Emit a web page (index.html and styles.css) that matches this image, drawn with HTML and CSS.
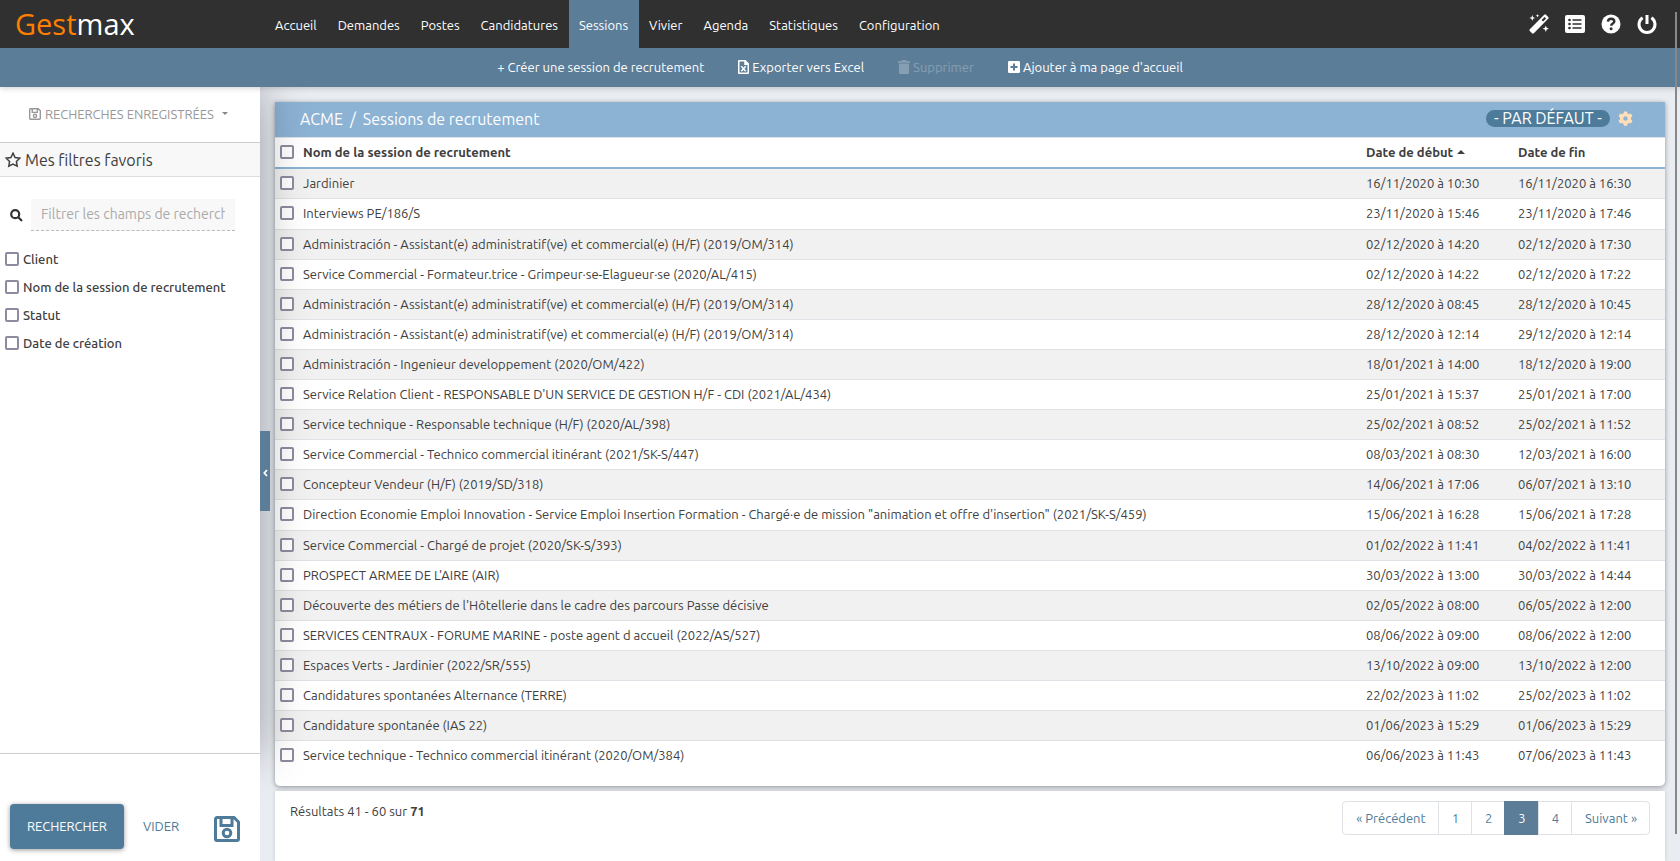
FILE: index.html
```html
<!DOCTYPE html>
<html lang="fr">
<head>
<meta charset="utf-8">
<title>Gestmax - Sessions de recrutement</title>
<link rel="stylesheet" href="styles.css">
</head>
<body>
<header class="topbar">
  <a class="logo" href="#"><span class="logo-accent">Gest</span>max</a>
  <nav class="nav">
    <a href="#">Accueil</a><a href="#">Demandes</a><a href="#">Postes</a><a href="#">Candidatures</a><a href="#" class="active">Sessions</a><a href="#">Vivier</a><a href="#">Agenda</a><a href="#">Statistiques</a><a href="#">Configuration</a>
  </nav>
  <div class="tools">
    <button aria-label="Assistant"><svg viewBox="0 0 20 20"><path fill-rule="evenodd" d="M15.2.8a1.3 1.3 0 0 1 1.8 0l2.2 2.2a1.3 1.3 0 0 1 0 1.8L4.800 19.200a1.300 1.300 0 0 1-1.800 0L.8 17a1.300 1.300 0 0 1 0-1.800zM12.600 6l1.500 1.500 3-3L15.600 3z"/><path d="M3.300 1l.8 2.200 2.200.8-2.200.8-.8 2.200-.8-2.200L.3 4l2.200-.8zM8.500 0l.5 1.300 1.300.5-1.300.5-.5 1.300L8 2.300l-1.300-.5L8 1.300zM16.800 11.500l.9 2.300 2.300.9-2.300.9-.9 2.300-.9-2.300-2.300-.9 2.300-.9z"/></svg></button>
    <button aria-label="Liste"><svg viewBox="0 0 20 20"><rect y="1" width="20" height="18" rx="2"/><g class="cut"><circle cx="4.500" cy="6" r="1.300"/><circle cx="4.500" cy="10" r="1.300"/><circle cx="4.500" cy="14" r="1.300"/><path d="M7.500 5.200h9v1.600h-9zM7.500 9.200h9v1.600h-9zM7.500 13.200h9v1.600h-9z"/></g></svg></button>
    <button aria-label="Aide"><svg viewBox="0 0 20 20"><circle cx="10" cy="10" r="9.500"/><path class="cut-line" d="M6.900 7.600C7.100 5.700 8.400 4.700 10.100 4.700c1.800 0 3.200 1 3.200 2.700 0 2.100-3.100 2.200-3.100 4.400"/><circle class="cut" cx="10.100" cy="14.800" r="1.500"/></svg></button>
    <button aria-label="Déconnexion"><svg viewBox="0 0 20 20"><path class="line" d="M5.600 3.800a8 8 0 1 0 8.800 0M10 1v9" /></svg></button>
  </div>
</header>
<div class="actions">
  <button>+ Créer une session de recrutement</button>
  <button><svg class="file" viewBox="0 0 11 14"><path fill-rule="evenodd" d="M1 0h6.500L11 3.500V13a1 1 0 0 1-1 1H1a1 1 0 0 1-1-1V1a1 1 0 0 1 1-1zm.5 1.400v11.200h8V5H6.200V1.400z"/><path class="x-line" d="M3.300 6.200l4.400 5M7.700 6.200l-4.400 5"/></svg>Exporter vers Excel</button>
  <button disabled><svg class="trash" viewBox="0 0 12 14"><path d="M4 0h4l.6 1H12v1.800H0V1h3.400zM1 3.600h10V13a1 1 0 0 1-1 1H2a1 1 0 0 1-1-1z"/></svg>Supprimer</button>
  <button><svg class="plus" viewBox="0 0 12 12"><path fill-rule="evenodd" d="M1.300 0h9.400A1.300 1.300 0 0 1 12 1.300v9.400a1.300 1.300 0 0 1-1.300 1.300H1.300A1.300 1.300 0 0 1 0 10.700V1.300A1.300 1.300 0 0 1 1.300 0zM5 2.500V5H2.500v2H5v2.500h2V7h2.500V5H7V2.500z"/></svg>Ajouter à ma page d'accueil</button>
</div>
<div class="workspace">
  <aside class="sidebar">
    <div class="filters">
      <button class="saved"><svg viewBox="0 0 26 26"><path class="save" d="M3 1.500h17l4.500 4.500v17a1.500 1.500 0 0 1-1.500 1.500H3A1.500 1.500 0 0 1 1.500 23V3A1.500 1.500 0 0 1 3 1.500zM7 2v7.500h11V2"/><circle class="save" cx="13" cy="17" r="3.500"/></svg>RECHERCHES ENREGISTRÉES<span class="caret"></span></button>
      <h2 class="favorites"><svg viewBox="0 0 16 16"><path d="M8 1.200l2.100 4.300 4.700.7-3.400 3.300.8 4.700L8 12l-4.200 2.200.8-4.700L1.200 6.200l4.700-.7z"/></svg>Mes filtres favoris</h2>
      <div class="search"><svg viewBox="0 0 13 13"><circle cx="5.200" cy="5.200" r="4"/><path d="M8.300 8.300l3.700 3.700"/></svg><input type="text" aria-label="Filtrer" placeholder="Filtrer les champs de recherche"></div>
      <div class="checks">
        <label><input type="checkbox">Client</label>
        <label><input type="checkbox">Nom de la session de recrutement</label>
        <label><input type="checkbox">Statut</label>
        <label><input type="checkbox">Date de création</label>
      </div>
    </div>
    <div class="side-actions">
      <button class="primary">RECHERCHER</button>
      <button class="clear">VIDER</button>
      <button class="store" aria-label="Enregistrer"><svg viewBox="0 0 26 26"><path class="save" d="M3 1.500h17l4.500 4.500v17a1.500 1.500 0 0 1-1.500 1.500H3A1.500 1.500 0 0 1 1.500 23V3A1.500 1.500 0 0 1 3 1.500zM7 2v7.500h11V2"/><circle class="save" cx="13" cy="17" r="3.800"/></svg></button>
    </div>
    <button class="collapse" aria-label="Replier"><svg viewBox="0 0 5 8"><path d="M4 1L1.300 4 4 7"/></svg></button>
  </aside>
  <main class="content">
    <section class="card">
      <div class="card-title">
        <h1>ACME<span>/</span>Sessions de recrutement</h1>
        <button class="view">- PAR DÉFAUT -</button>
        <button class="gear" aria-label="Réglages"><svg viewBox="-8 -8 16 16"><circle r="4.200"/><g><path id="tooth" d="M-1.700-7.600h3.400l.8 4h-5z"/><use href="#tooth" transform="rotate(60)"/><use href="#tooth" transform="rotate(120)"/><use href="#tooth" transform="rotate(180)"/><use href="#tooth" transform="rotate(240)"/><use href="#tooth" transform="rotate(300)"/></g></svg></button>
      </div>
      <table>
        <thead><tr><th class="pick"><input type="checkbox" aria-label="Tout sélectionner"></th><th>Nom de la session de recrutement</th><th class="start">Date de début<span class="sort"></span></th><th class="end">Date de fin</th></tr></thead>
        <tbody>
<tr><td class="pick"><input type="checkbox" aria-label="Sélectionner"></td><td>Jardinier</td><td>16/11/2020 à 10:30</td><td>16/11/2020 à 16:30</td></tr>
<tr><td class="pick"><input type="checkbox" aria-label="Sélectionner"></td><td>Interviews PE/186/S</td><td>23/11/2020 à 15:46</td><td>23/11/2020 à 17:46</td></tr>
<tr><td class="pick"><input type="checkbox" aria-label="Sélectionner"></td><td>Administración - Assistant(e) administratif(ve) et commercial(e) (H/F) (2019/OM/314)</td><td>02/12/2020 à 14:20</td><td>02/12/2020 à 17:30</td></tr>
<tr><td class="pick"><input type="checkbox" aria-label="Sélectionner"></td><td>Service Commercial - Formateur.trice - Grimpeur·se-Elagueur·se (2020/AL/415)</td><td>02/12/2020 à 14:22</td><td>02/12/2020 à 17:22</td></tr>
<tr><td class="pick"><input type="checkbox" aria-label="Sélectionner"></td><td>Administración - Assistant(e) administratif(ve) et commercial(e) (H/F) (2019/OM/314)</td><td>28/12/2020 à 08:45</td><td>28/12/2020 à 10:45</td></tr>
<tr><td class="pick"><input type="checkbox" aria-label="Sélectionner"></td><td>Administración - Assistant(e) administratif(ve) et commercial(e) (H/F) (2019/OM/314)</td><td>28/12/2020 à 12:14</td><td>29/12/2020 à 12:14</td></tr>
<tr><td class="pick"><input type="checkbox" aria-label="Sélectionner"></td><td>Administración - Ingenieur developpement (2020/OM/422)</td><td>18/01/2021 à 14:00</td><td>18/12/2020 à 19:00</td></tr>
<tr><td class="pick"><input type="checkbox" aria-label="Sélectionner"></td><td>Service Relation Client - RESPONSABLE D'UN SERVICE DE GESTION H/F - CDI (2021/AL/434)</td><td>25/01/2021 à 15:37</td><td>25/01/2021 à 17:00</td></tr>
<tr><td class="pick"><input type="checkbox" aria-label="Sélectionner"></td><td>Service technique - Responsable technique (H/F) (2020/AL/398)</td><td>25/02/2021 à 08:52</td><td>25/02/2021 à 11:52</td></tr>
<tr><td class="pick"><input type="checkbox" aria-label="Sélectionner"></td><td>Service Commercial - Technico commercial itinérant (2021/SK-S/447)</td><td>08/03/2021 à 08:30</td><td>12/03/2021 à 16:00</td></tr>
<tr><td class="pick"><input type="checkbox" aria-label="Sélectionner"></td><td>Concepteur Vendeur (H/F) (2019/SD/318)</td><td>14/06/2021 à 17:06</td><td>06/07/2021 à 13:10</td></tr>
<tr><td class="pick"><input type="checkbox" aria-label="Sélectionner"></td><td>Direction Economie Emploi Innovation - Service Emploi Insertion Formation - Chargé·e de mission "animation et offre d'insertion" (2021/SK-S/459)</td><td>15/06/2021 à 16:28</td><td>15/06/2021 à 17:28</td></tr>
<tr><td class="pick"><input type="checkbox" aria-label="Sélectionner"></td><td>Service Commercial - Chargé de projet (2020/SK-S/393)</td><td>01/02/2022 à 11:41</td><td>04/02/2022 à 11:41</td></tr>
<tr><td class="pick"><input type="checkbox" aria-label="Sélectionner"></td><td>PROSPECT ARMEE DE L'AIRE (AIR)</td><td>30/03/2022 à 13:00</td><td>30/03/2022 à 14:44</td></tr>
<tr><td class="pick"><input type="checkbox" aria-label="Sélectionner"></td><td>Découverte des métiers de l'Hôtellerie dans le cadre des parcours Passe décisive</td><td>02/05/2022 à 08:00</td><td>06/05/2022 à 12:00</td></tr>
<tr><td class="pick"><input type="checkbox" aria-label="Sélectionner"></td><td>SERVICES CENTRAUX - FORUME MARINE - poste agent d accueil (2022/AS/527)</td><td>08/06/2022 à 09:00</td><td>08/06/2022 à 12:00</td></tr>
<tr><td class="pick"><input type="checkbox" aria-label="Sélectionner"></td><td>Espaces Verts - Jardinier (2022/SR/555)</td><td>13/10/2022 à 09:00</td><td>13/10/2022 à 12:00</td></tr>
<tr><td class="pick"><input type="checkbox" aria-label="Sélectionner"></td><td>Candidatures spontanées Alternance (TERRE)</td><td>22/02/2023 à 11:02</td><td>25/02/2023 à 11:02</td></tr>
<tr><td class="pick"><input type="checkbox" aria-label="Sélectionner"></td><td>Candidature spontanée (IAS 22)</td><td>01/06/2023 à 15:29</td><td>01/06/2023 à 15:29</td></tr>
<tr><td class="pick"><input type="checkbox" aria-label="Sélectionner"></td><td>Service technique - Technico commercial itinérant (2020/OM/384)</td><td>06/06/2023 à 11:43</td><td>07/06/2023 à 11:43</td></tr>
        </tbody>
      </table>
    </section>
    <section class="footer">
      <p>Résultats 41 - 60 sur <b>71</b></p>
      <nav class="pages" aria-label="Pagination"><a href="#">« Précédent</a><a href="#">1</a><a href="#">2</a><a href="#" class="current">3</a><a href="#">4</a><a href="#">Suivant »</a></nav>
    </section>
  </main>
</div>
<div class="scroll-thumb"></div>
</body>
</html>
```

FILE: styles.css
```css
* { box-sizing: border-box; }
body {
  margin: 0;
  height: 100vh;
  display: flex;
  flex-direction: column;
  overflow: hidden;
  background: #e9ecf1;
  color: #404040;
  font: 13px/20px Ubuntu, "Noto Sans", sans-serif;
}
button { font: inherit; color: inherit; border: 0; padding: 0; background: none; white-space: nowrap; }
a { color: inherit; text-decoration: none; }
h1, h2, p { margin: 0; font-weight: 400; }
svg { display: block; flex: none; fill: currentColor; }

.topbar { display: flex; flex: none; height: 48px; background: #303030; color: #fff; z-index: 3; }
.logo { width: 265px; padding-left: 15px; font-family: "Open Sans", sans-serif; font-size: 29px; line-height: 48px; }
.logo-accent { color: #ff7f00; }
.nav { display: flex; }
.nav a { padding: 0 11px 0 10px; line-height: 50px; height: 48px; }
.nav .active { background: #5c7d98; }
.tools { display: flex; align-items: center; gap: 16px; margin-left: auto; padding-right: 23px; }
.tools svg { width: 20px; height: 20px; }
.cut { fill: #303030; }
.cut-line { fill: none; stroke: #303030; stroke-width: 2.400; }
.line { fill: none; stroke: currentColor; stroke-width: 3; }

.actions { display: flex; flex: none; justify-content: center; gap: 34px; height: 39px; padding-bottom: 2px; background: #5c7d98; color: #fff; box-shadow: 0 1px 6px rgba(0, 0, 0, .2); z-index: 2; }
.actions button { display: flex; align-items: center; gap: 3px; }
.actions button:disabled { opacity: .25; }
.file { width: 11px; height: 14px; }
.trash { width: 12px; height: 14px; }
.plus { width: 12px; height: 12px; }
.x-line { fill: none; stroke: currentColor; stroke-width: 1.500; }

.workspace { display: flex; flex: 1; min-height: 0; }
.sidebar { position: relative; display: flex; flex-direction: column; flex: none; width: 260px; z-index: 1; }
.filters { flex: 1; background: #fff; border-bottom: 1px solid #ccc; box-shadow: 0 0 44px rgba(0, 10, 20, .35); }
.saved { display: flex; align-items: center; gap: 4px; height: 55px; padding: 0 0 2px 29px; color: #999; }
.saved svg { width: 12px; height: 12px; }
.save { fill: none; stroke: currentColor; stroke-width: 3; }
.caret { margin-left: 4px; border: 3px solid transparent; border-top-color: #888; border-bottom: 0; }
.favorites { display: flex; align-items: center; gap: 4px; height: 35px; padding-left: 5px; border-top: 1px solid #ccc; border-bottom: 1px solid #ddd; background: #f8f8f8; font-size: 16px; }
.favorites svg { width: 16px; height: 16px; fill: none; stroke: currentColor; stroke-width: 1.500; }
.search { display: flex; align-items: center; gap: 8px; padding: 22px 25px 0 10px; }
.search svg { width: 13px; height: 13px; fill: none; stroke: #333; stroke-width: 2.200; }
.search input { flex: 1; min-width: 0; height: 32px; padding: 0 10px 2px; border: 0; border-bottom: 1px dashed #bbb; background: #f8f8f8; font: inherit; font-size: 14px; }
.search input::placeholder { color: #aaa; }
.checks { display: grid; gap: 8px; padding: 18px 5px; font-weight: 500; }
.checks label { display: flex; align-items: center; gap: 4px; white-space: nowrap; }
input[type="checkbox"] { appearance: none; flex: none; display: block; width: 14px; height: 14px; margin: 0; border: 2px solid #8f8b9e; border-radius: 2px; background: #fff; }
.side-actions { position: relative; display: flex; align-items: center; height: 107px; padding: 38px 20px 0 10px; background: #fff; color: #4e7b9a; }
.primary { width: 114px; height: 45px; padding-bottom: 2px; border-radius: 4px; background: #4e7b9a; color: #fff; box-shadow: 0 1px 5px rgba(0, 0, 0, .4); }
.clear { margin-left: 19px; padding-bottom: 2px; }
.store { margin: 4px 0 0 auto; }
.store svg { width: 26px; height: 26px; }
.collapse { position: absolute; left: 100%; top: 344px; width: 10px; height: 80px; padding-top: 3px; display: grid; place-items: center; background: #5c7d98; color: #fff; }
.collapse svg { width: 5px; height: 8px; fill: none; stroke: currentColor; stroke-width: 1.800; }

.content { display: flex; flex-direction: column; gap: 5px; flex: 1; min-width: 0; padding: 15px 15px 0; }
.card { flex: none; padding-bottom: 15px; background: #fff; border-radius: 0 0 5px 5px; box-shadow: 0 1px 5px rgba(0, 0, 0, .4); }
.card-title { display: flex; align-items: center; height: 36px; padding: 0 32px 2px 25px; border-bottom: 1px solid #dee2e6; background: #8cb2d4; color: #fff; }
.card-title h1 { flex: 1; font-size: 16px; }
.card-title h1 span { margin: 0 7px; }
.view { width: 124px; height: 17px; border-radius: 9px; background: #4e7b9a; font-size: 16px; line-height: 17px; }
.gear { margin-left: 8px; color: #ffdfb8; }
.gear svg { width: 15px; height: 15px; }
.gear circle { fill: none; stroke: currentColor; stroke-width: 3.600; }
table { width: 100%; border-collapse: separate; border-spacing: 0; table-layout: fixed; }
th, td { height: 30px; padding: 0 0 2px; border-bottom: 1px solid #dee2e6; text-align: left; white-space: nowrap; }
th { height: 31px; border-bottom: 2px solid #8cb2d4; }
tr:nth-child(10n+2) td { height: 31px; }
.pick { width: 28px; padding-left: 5px; }
.start { width: 152px; }
.end { width: 147px; }
tbody tr:nth-child(odd) { background: #f1f1f1; }
tbody tr:last-child td { border-bottom: 0; }
.sort { display: inline-block; margin-left: 4px; vertical-align: 3px; border: 4px solid transparent; border-bottom-color: #404040; border-top: 0; }

.footer { display: flex; flex: 1; align-items: flex-start; justify-content: space-between; padding: 10px 15px; background: #fff; box-shadow: 0 0 4px rgba(0, 0, 0, .15); }
.pages { display: flex; color: #4e7b9a; }
.pages a { height: 34px; padding: 0 12px 0 13px; line-height: 32px; border: 1px solid #dee2e6; margin-left: -1px; }
.pages a:first-child { border-radius: 4px 0 0 4px; }
.pages a:last-child { border-radius: 0 4px 4px 0; }
.pages .current { background: #5c7d98; border-color: #5c7d98; color: #fff; }
.scroll-thumb { position: absolute; right: 3px; top: 12px; bottom: 27px; width: 2px; background: #888; z-index: 4; }
```
